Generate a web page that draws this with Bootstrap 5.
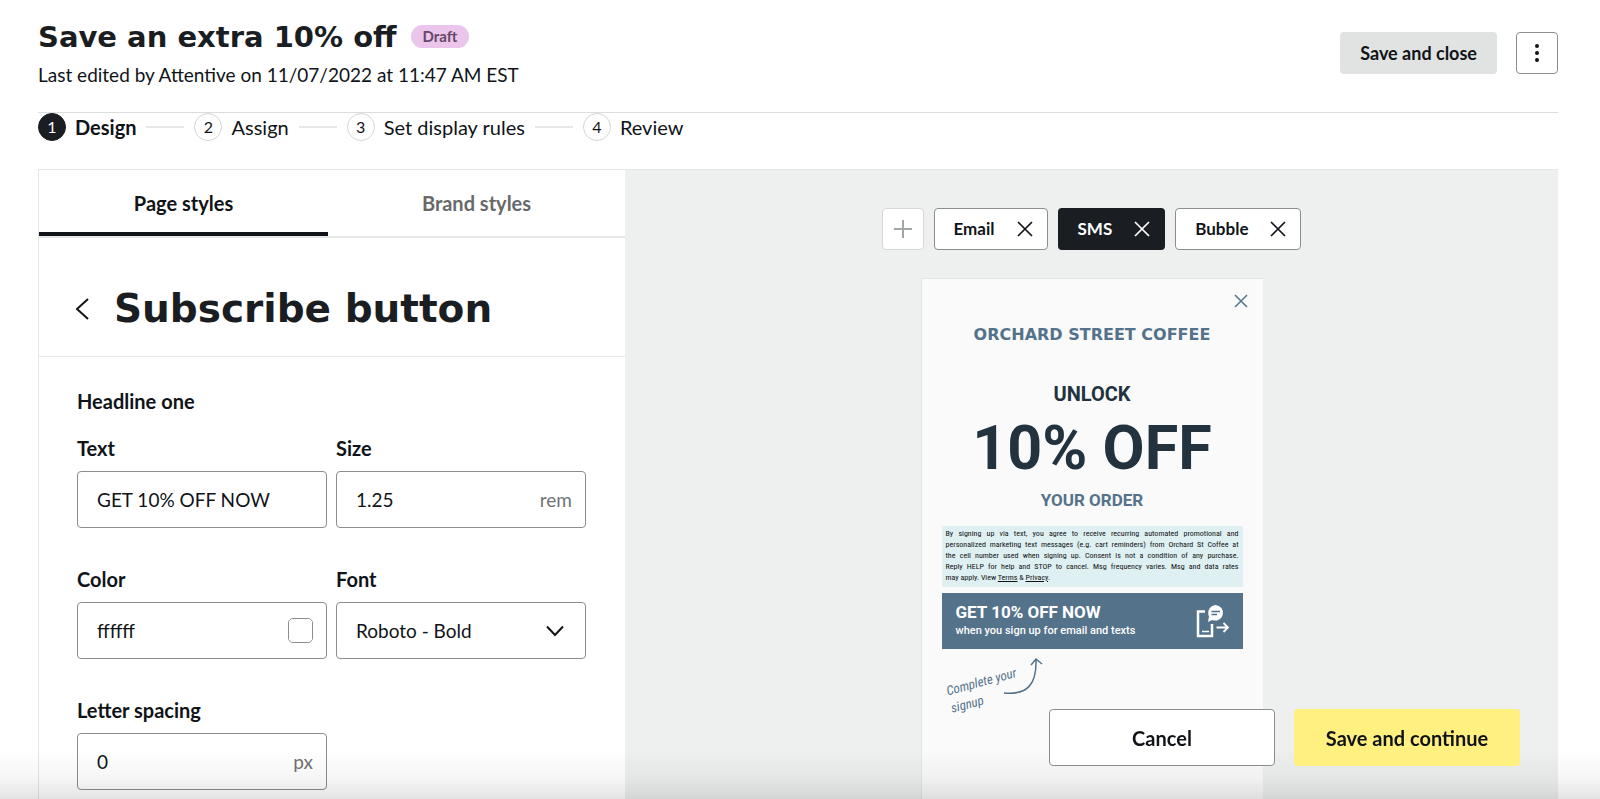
<!DOCTYPE html>
<html lang="en">
<head>
<meta charset="utf-8">
<meta name="viewport" content="width=device-width, initial-scale=1">
<title>Save an extra 10% off</title>
<link href="https://cdn.jsdelivr.net/npm/bootstrap@5.3.0/dist/css/bootstrap.min.css" rel="stylesheet">
<style>
  :root { --ink: #1a1d21; --rule: #e6e7e7; --slate: #54728a; --navy: #22333f; }
  body { font-family: Lato, sans-serif; font-size: 19px; line-height: 24px; color: #101418; }
  .page { padding: 0 42px 0 38px; }
  .display-font { font-family: "DejaVu Sans", sans-serif; font-weight: 700; color: var(--ink); }
  .page-head { height: 113px; padding-bottom: 7px; border-bottom: 1px solid #dcdede; }
  .head-actions { gap: 19px; }
  .title-row { gap: 14px; }
  .page-title { font-size: 29px; line-height: 36px; }
  .draft-tag { background: #ecc5ec; color: #654968; font-size: 15px; line-height: 15px; padding: 4px 12px; }
  .btn { --bs-btn-border-radius: 4px; --bs-btn-font-weight: 700; --bs-btn-color: #101418; }
  .btn-tool { height: 42px; font-size: 17px; line-height: 24px; padding: 0 19px; }
  .btn-icon { width: 42px; padding: 0; display: flex; align-items: center; justify-content: center; }
  .btn-line { background: #fff; border-color: #8b8e90; }
  .btn-soft { background: #e1e3e2; font-size: 18px; }
  .btn-dim { border-color: #d5d8d8; color: #a4a7a7; }
  .btn-ink { background: var(--ink); color: #fff; }
  .btn-foot { width: 226px; height: 57px; font-size: 20px; }
  .btn-yellow { background: #fff07f; }

  .steps { gap: 10px; height: 56px; padding-bottom: 28px; font-size: 20px; }
  .steps a { gap: 9px; color: inherit; }
  .step-no { width: 28px; height: 28px; border: 1px solid #d3d5d5; font-size: 16px; line-height: 16px; }
  .current .step-no { background: var(--ink); border-color: var(--ink); color: #fff; }
  .step-line { width: 38px; height: 2px; background: var(--rule); }

  .editor { width: 587px; border: solid var(--rule); border-width: 1px 0 0 1px; }
  .tabs { height: 68px; border-bottom: 2px solid var(--rule); }
  .tabs button { border: 0; background: none; font-size: 20px; font-weight: 700; color: #67696b; border-bottom: 4px solid transparent; padding-top: 4px; }
  .tabs button.active { width: 289px; color: #101418; border-color: #101418; }
  .panel-head { height: 119px; padding: 24px 37px 0 34px; gap: 23px; border-bottom: 1px solid var(--rule); }
  .panel-head h2 { font-size: 39px; line-height: 48px; }
  .fields { padding: 32px 39px 8px 38px; }
  .fields h3, .fields label { font-size: 20px; line-height: 24px; font-weight: 700; }
  .fields h3 { margin-bottom: 23px; }
  .fields label { margin-bottom: 11px; }
  .fields .row { --bs-gutter-x: 9px; --bs-gutter-y: 39px; }
  .field { border: 1px solid #8b8e90; border-radius: 4px; height: 57px; padding: 0 13px 0 19px; background: #fff; }
  .field input[type=text] { border: 0; outline: 0; min-width: 0; background: none; color: #101418; padding: 0; }
  .unit { color: #707375; }
  .swatch { width: 25px; height: 25px; padding: 0; border: 1px solid #8b8e90; border-radius: 5px; background: #fff; appearance: none; }
  .swatch::-webkit-color-swatch-wrapper { padding: 0; }
  .swatch::-webkit-color-swatch { border: 0; border-radius: 4px; }
  select.field { width: 100%; appearance: none; color: #101418; padding-right: 48px;
    background: #fff url("data:image/svg+xml,%3Csvg xmlns='http://www.w3.org/2000/svg' width='18' height='12' fill='none' stroke='%23101418' stroke-width='2'%3E%3Cpath d='M1 1.500l8 8.500 8-8.500'/%3E%3C/svg%3E") no-repeat right 21px center; }

  .preview { background: #edf0ef; padding: 38px 0 0; border-top: 1px solid #e6e9e8; font-family: Roboto, sans-serif; }
  .variants { gap: 10px; font-family: Lato, sans-serif; margin-bottom: 28px; }
  .variants .btn-tool:not(.btn-icon) { padding-right: 14px; display: flex; align-items: center; gap: 22px; }
  .phone { width: 342px; background: #fafafa; border: solid #e3e6e6; border-width: 1px 0 0 1px; padding: 14px 20px 0; }
  .phone-close { background: none; border: 0; padding: 0; width: 20px; height: 16px; margin-right: -8px; line-height: 0; color: var(--slate); }
  .logo-text { font: 700 16px/20px "DejaVu Sans", sans-serif; color: var(--slate); margin: 16px 0 37px; }
  .t-unlock { font-size: 20px; line-height: 24px; color: var(--navy); font-weight: 700; margin: 0; }
  .t-offer { font-size: 61px; line-height: 72px; color: var(--navy); font-weight: 700; margin: 6px 0 4px; }
  .t-order { font-size: 17px; line-height: 24px; color: var(--slate); font-weight: 700; margin: 0 0 14px; }
  .legal { font: 8px/11px "Roboto Condensed", "Liberation Sans Narrow", Roboto, sans-serif; color: #111; background: #dff0f3; padding: 2px 4px 4px; margin: 0 0 6px; }
  .legal span { display: block; white-space: nowrap; text-align: justify; text-align-last: justify; }
  .legal span:last-child { text-align-last: left; }
  .legal a { color: inherit; }
  .cta { background: var(--slate); color: #fff; border: 0; height: 56px; padding: 0 14px 0 14px; text-align: left; }
  .cta strong { font-size: 17px; line-height: 20px; }
  .cta span { font-size: 11px; line-height: 18px; font-weight: 500; }
  .hint { color: var(--slate); font: italic 13px/18px "Liberation Sans Narrow", "Roboto Condensed", cursive; }
  .hint p { transform: rotate(-15deg); margin: 26px 0 0 6px; width: 56px; white-space: nowrap; }
  .hint svg { margin: 8px 0 0 0; }

  .dock { padding: 0 80px 33px; gap: 19px; background: linear-gradient(to top, rgba(0, 0, 0, .11), rgba(0, 0, 0, .04) 20px, transparent 50px); }
</style>
</head>
<body>
<div class="page d-flex flex-column min-vh-100">
  <header class="page-head d-flex align-items-center justify-content-between">
    <div>
      <div class="title-row d-flex align-items-center">
        <h1 class="page-title display-font mb-0">Save an extra 10% off</h1>
        <span class="draft-tag badge rounded-pill">Draft</span>
      </div>
      <p class="mb-0 mt-2">Last edited by Attentive on 11/07/2022 at 11:47 AM EST</p>
    </div>
    <div class="head-actions d-flex">
      <button type="button" class="btn btn-tool btn-soft">Save and close</button>
      <button type="button" class="btn btn-tool btn-icon btn-line" aria-label="More options">
        <svg width="4" height="20" fill="currentColor"><circle cx="2" cy="3" r="2"/><circle cx="2" cy="10" r="2"/><circle cx="2" cy="17" r="2"/></svg>
      </button>
    </div>
  </header>

  <nav class="steps d-flex align-items-center" aria-label="Steps">
    <a href="#" class="current d-flex align-items-center text-decoration-none fw-bold"><span class="step-no rounded-circle d-flex align-items-center justify-content-center fw-normal">1</span>Design</a>
    <span class="step-line"></span>
    <a href="#" class="d-flex align-items-center text-decoration-none"><span class="step-no rounded-circle d-flex align-items-center justify-content-center">2</span>Assign</a>
    <span class="step-line"></span>
    <a href="#" class="d-flex align-items-center text-decoration-none"><span class="step-no rounded-circle d-flex align-items-center justify-content-center">3</span>Set display rules</a>
    <span class="step-line"></span>
    <a href="#" class="d-flex align-items-center text-decoration-none"><span class="step-no rounded-circle d-flex align-items-center justify-content-center">4</span>Review</a>
  </nav>

  <main class="d-flex flex-grow-1">
    <section class="editor flex-shrink-0">
      <div class="tabs d-flex">
        <button type="button" class="active">Page styles</button>
        <button type="button" class="flex-grow-1">Brand styles</button>
      </div>
      <div class="panel-head d-flex align-items-center">
        <button type="button" class="btn p-0 border-0 lh-1" aria-label="Back">
          <svg width="18" height="24" fill="none" stroke="currentColor" stroke-width="2"><path d="M15 2L4 12l11 10"/></svg>
        </button>
        <h2 class="display-font mb-0 text-nowrap">Subscribe button</h2>
      </div>
      <form class="fields">
        <h3>Headline one</h3>
        <div class="row">
          <div class="col-6">
            <label for="f-text" class="d-block">Text</label>
            <div class="field d-flex align-items-center"><input id="f-text" type="text" class="flex-grow-1" value="GET 10% OFF NOW"></div>
          </div>
          <div class="col-6">
            <label for="f-size" class="d-block">Size</label>
            <div class="field d-flex align-items-center"><input id="f-size" type="text" class="flex-grow-1" value="1.25"><span class="unit">rem</span></div>
          </div>
          <div class="col-6">
            <label for="f-color" class="d-block">Color</label>
            <div class="field d-flex align-items-center"><input id="f-color" type="text" class="flex-grow-1" value="ffffff"><input type="color" class="swatch flex-shrink-0" value="#ffffff" aria-label="Pick color"></div>
          </div>
          <div class="col-6">
            <label for="f-font" class="d-block">Font</label>
            <select id="f-font" class="field"><option>Roboto - Bold</option></select>
          </div>
          <div class="col-6">
            <label for="f-spacing" class="d-block">Letter spacing</label>
            <div class="field d-flex align-items-center"><input id="f-spacing" type="text" class="flex-grow-1" value="0"><span class="unit">px</span></div>
          </div>
        </div>
      </form>
    </section>

    <section class="preview flex-grow-1 d-flex flex-column align-items-center">
      <div class="variants d-flex">
        <button type="button" class="btn btn-tool btn-icon btn-line btn-dim" aria-label="Add"><svg width="18" height="18" stroke="currentColor" stroke-width="2"><path d="M9 0v18M0 9h18"/></svg></button>
        <button type="button" class="btn btn-tool btn-line">Email <svg width="16" height="16" stroke="currentColor" stroke-width="1.700"><path d="M1 1l14 14M15 1L1 15"/></svg></button>
        <button type="button" class="btn btn-tool btn-ink">SMS <svg width="16" height="16" stroke="currentColor" stroke-width="1.700"><path d="M1 1l14 14M15 1L1 15"/></svg></button>
        <button type="button" class="btn btn-tool btn-line">Bubble <svg width="16" height="16" stroke="currentColor" stroke-width="1.700"><path d="M1 1l14 14M15 1L1 15"/></svg></button>
      </div>
      <div class="phone flex-grow-1 d-flex flex-column">
        <button type="button" class="phone-close align-self-end" aria-label="Close"><svg width="14" height="14" stroke="currentColor" stroke-width="1.500"><path d="M1 1l12 12M13 1L1 13"/></svg></button>
        <p class="logo-text text-center text-nowrap">ORCHARD STREET COFFEE</p>
        <p class="t-unlock text-center">UNLOCK</p>
        <p class="t-offer text-center text-nowrap">10% OFF</p>
        <p class="t-order text-center">YOUR ORDER</p>
        <p class="legal">
          <span>By signing up via text, you agree to receive recurring automated promotional and</span>
          <span>personalized marketing text messages (e.g. cart reminders) from Orchard St Coffee at</span>
          <span>the cell number used when signing up. Consent is not a condition of any purchase.</span>
          <span>Reply HELP for help and STOP to cancel. Msg frequency varies. Msg and data rates</span>
          <span>may apply. View <a href="#">Terms</a> &amp; <a href="#">Privacy</a>.</span>
        </p>
        <button type="button" class="cta d-flex align-items-center justify-content-between">
          <span class="d-flex flex-column"><strong>GET 10% OFF NOW</strong><span>when you sign up for email and texts</span></span>
          <svg width="34" height="34" viewBox="0 0 34 34" fill="none" stroke="#fff" stroke-width="2.500">
            <path d="M10 7.500H3V32h14V20"/><path d="M7 27.500h7" stroke-width="1.500"/>
            <path d="M20.500 1a8 7.800 0 1 1-3.500 15l-4 2 1-5.500a8 8 0 0 1 6.500-11.500z" fill="#fff" stroke="none"/>
            <path d="M16.500 7.500h8.500M16.500 10.500h5.500" stroke="#54728a" stroke-width="1.500"/>
            <path d="M21.500 23.500h11M28.500 19l4.500 4.500-4.500 4.500" stroke-width="1.800"/>
          </svg>
        </button>
        <div class="hint d-flex">
          <p>Complete your<br>signup</p>
          <svg width="44" height="42" fill="none" stroke="currentColor" stroke-width="1.500"><path d="M0 36C22 38 33 29 32 2M27 8l5-6 6 5"/></svg>
        </div>
      </div>
    </section>
  </main>
</div>

<footer class="dock fixed-bottom d-flex justify-content-end">
  <button type="button" class="btn btn-foot btn-line">Cancel</button>
  <button type="button" class="btn btn-foot btn-yellow">Save and continue</button>
</footer>
<script src="https://cdn.jsdelivr.net/npm/bootstrap@5.3.0/dist/js/bootstrap.bundle.min.js"></script>
</body>
</html>
